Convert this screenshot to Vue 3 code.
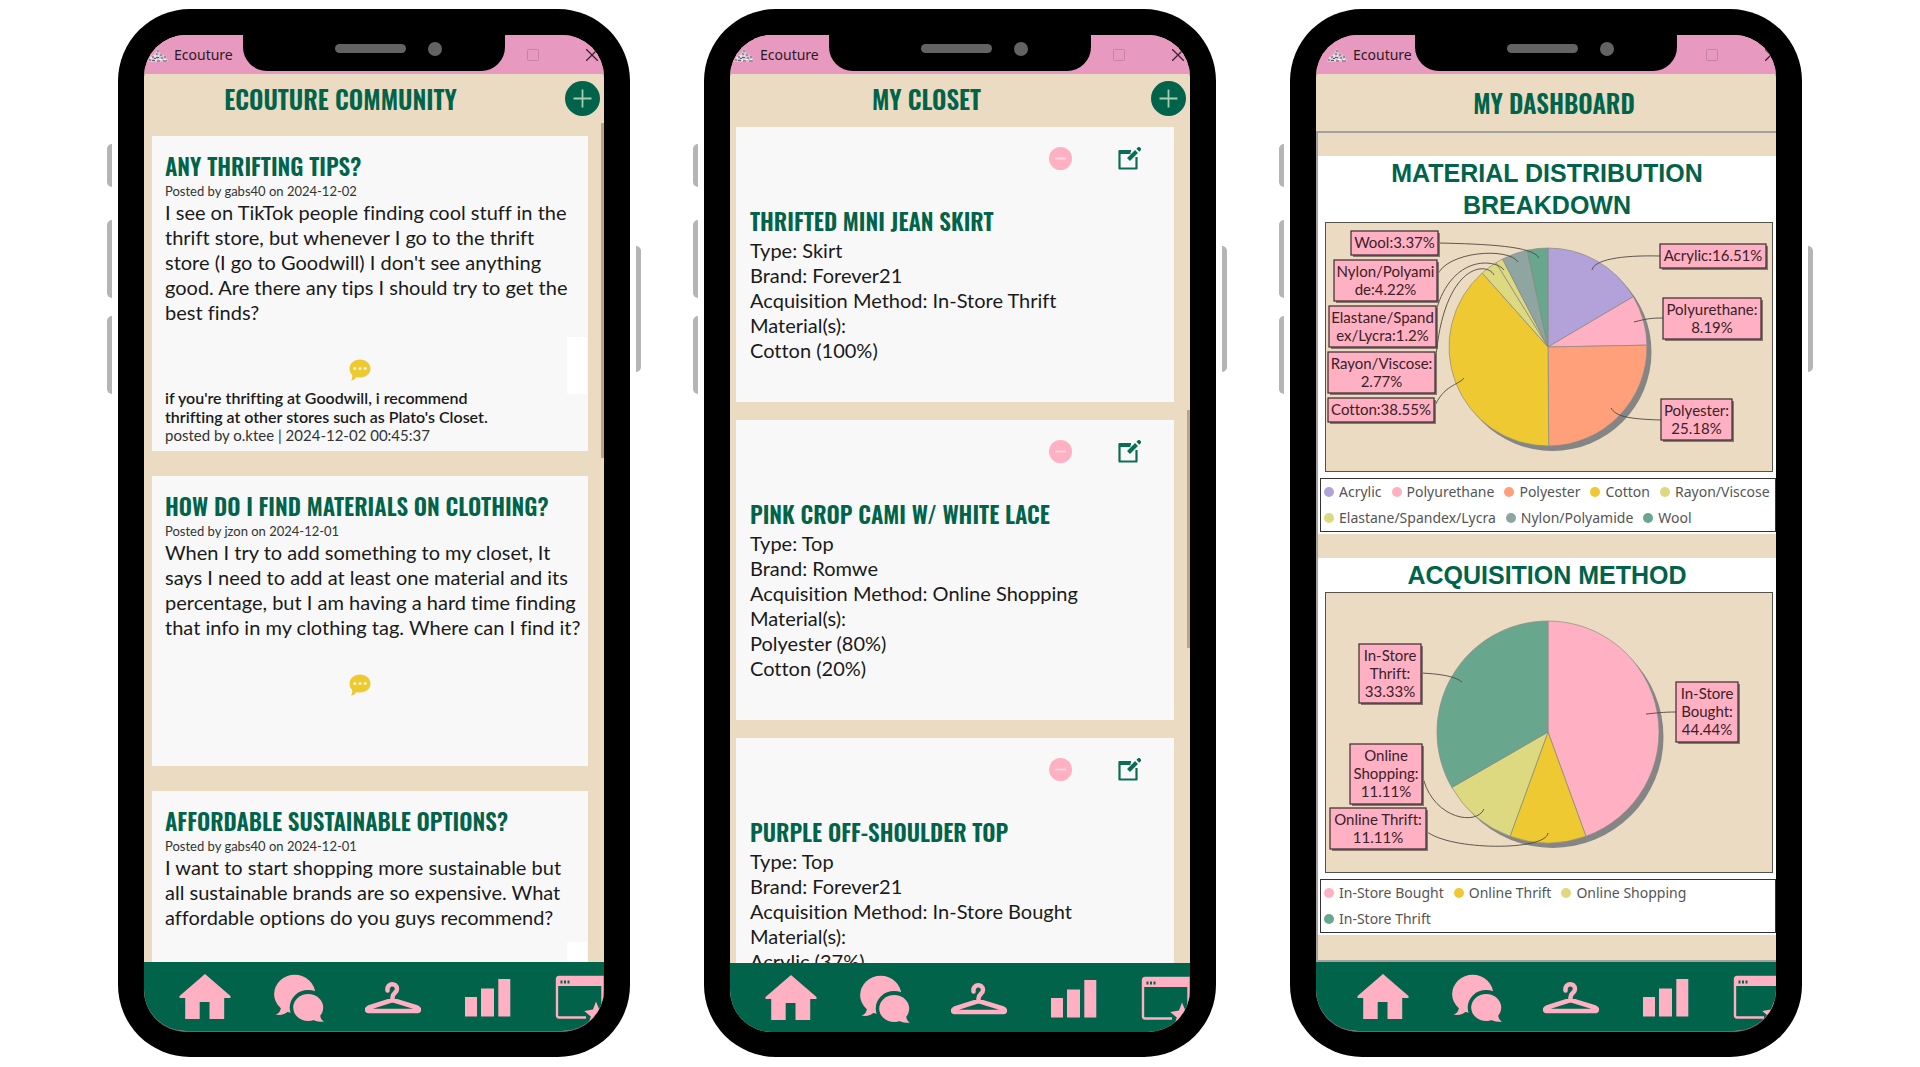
<script setup>
const posts = [
  {
    title: 'ANY THRIFTING TIPS?',
    meta: 'Posted by gabs40 on 2024-12-02',
    body: "I see on TikTok people finding cool stuff in the thrift store, but whenever I go to the thrift store (I go to Goodwill) I don't see anything good. Are there any tips I should try to get the best finds?",
    panel: true,
    comment: "if you're thrifting at Goodwill, i recommend thrifting at other stores such as Plato's Closet.",
    commentMeta: 'posted by o.ktee | 2024-12-02 00:45:37'
  },
  {
    title: 'HOW DO I FIND MATERIALS ON CLOTHING?',
    meta: 'Posted by jzon on 2024-12-01',
    body: 'When I try to add something to my closet, It says I need to add at least one material and its percentage, but I am having a hard time finding that info in my clothing tag. Where can I find it?'
  },
  {
    title: 'AFFORDABLE SUSTAINABLE OPTIONS?',
    meta: 'Posted by gabs40 on 2024-12-01',
    body: 'I want to start shopping more sustainable but all sustainable brands are so expensive. What affordable options do you guys recommend?',
    panel: true
  }
]

const items = [
  { title: 'THRIFTED MINI JEAN SKIRT', lines: ['Type: Skirt', 'Brand: Forever21', 'Acquisition Method: In-Store Thrift', 'Material(s):', 'Cotton (100%)'] },
  { title: 'PINK CROP CAMI W/ WHITE LACE', lines: ['Type: Top', 'Brand: Romwe', 'Acquisition Method: Online Shopping', 'Material(s):', 'Polyester (80%)', 'Cotton (20%)'] },
  { title: 'PURPLE OFF-SHOULDER TOP', lines: ['Type: Top', 'Brand: Forever21', 'Acquisition Method: In-Store Bought', 'Material(s):', 'Acrylic (37%)'] }
]

const C = {
  lilac: '#b3a2d9', pink: '#ffb0c2', orange: '#ffa07a', gold: '#eec931',
  khaki: '#ddd980', slate: '#8fa5a1', green: '#68a68d'
}

function slices(parts, cx, cy, r) {
  const total = parts.reduce((s, p) => s + p.value, 0)
  let at = 0
  return parts.map((p) => {
    const a = (at / total) * Math.PI * 2
    at += p.value
    const b = (at / total) * Math.PI * 2
    const large = b - a > Math.PI ? 1 : 0
    const x1 = cx + r * Math.sin(a), y1 = cy - r * Math.cos(a)
    const x2 = cx + r * Math.sin(b), y2 = cy - r * Math.cos(b)
    return { color: p.color, d: `M${cx} ${cy}L${x1} ${y1}A${r} ${r} 0 ${large} 1 ${x2} ${y2}Z` }
  })
}

function chart(c) {
  return { ...c, slices: slices(c.parts, c.cx, c.cy, c.r) }
}

const charts = [
  chart({
    title: 'MATERIAL DISTRIBUTION BREAKDOWN',
    width: 446, height: 248, cx: 222, cy: 124, r: 99,
    parts: [
      { name: 'Acrylic', value: 16.51, color: C.lilac },
      { name: 'Polyurethane', value: 8.19, color: C.pink },
      { name: 'Polyester', value: 25.18, color: C.orange },
      { name: 'Cotton', value: 38.55, color: C.gold },
      { name: 'Rayon/Viscose', value: 2.77, color: C.khaki },
      { name: 'Elastane/Spandex/Lycra', value: 1.2, color: C.khaki },
      { name: 'Nylon/Polyamide', value: 4.22, color: C.slate },
      { name: 'Wool', value: 3.37, color: C.green }
    ],
    labels: [
      { x: 25, y: 8, w: 87, h: 24, lines: ['Wool:3.37%'], lead: 'M112 20C160 21 207 23 213 35' },
      { x: 8, y: 37, w: 103, h: 41, lines: ['Nylon/Polyami', 'de:4.22%'], lead: 'M111 53C120 28 183 24 192 39' },
      { x: 3, y: 83, w: 107, h: 41, lines: ['Elastane/Spand', 'ex/Lycra:1.2%'], lead: 'M110 88C126 31 170 36 178 47' },
      { x: 2, y: 129, w: 107, h: 41, lines: ['Rayon/Viscose:', '2.77%'], lead: 'M109 148C114 42 160 37 168 52' },
      { x: 2, y: 175, w: 106, h: 24, lines: ['Cotton:38.55%'], lead: 'M108 185C117 162 133 162 138 155' },
      { x: 334, y: 21, w: 106, h: 24, lines: ['Acrylic:16.51%'], lead: 'M334 33C294 32 268 37 266 47' },
      { x: 337, y: 75, w: 98, h: 41, lines: ['Polyurethane:', '8.19%'], lead: 'M337 95C324 95 320 96 308 99' },
      { x: 335, y: 176, w: 71, h: 41, lines: ['Polyester:', '25.18%'], lead: 'M335 197C300 196 290 193 285 185' }
    ]
  }),
  chart({
    title: 'ACQUISITION METHOD',
    width: 446, height: 279, cx: 222, cy: 139, r: 111,
    parts: [
      { name: 'In-Store Bought', value: 44.44, color: C.pink },
      { name: 'Online Thrift', value: 11.11, color: C.gold },
      { name: 'Online Shopping', value: 11.11, color: C.khaki },
      { name: 'In-Store Thrift', value: 33.33, color: C.green }
    ],
    labels: [
      { x: 33, y: 51, w: 62, h: 59, lines: ['In-Store', 'Thrift:', '33.33%'], lead: 'M95 80C117 81 130 84 136 89' },
      { x: 350, y: 89, w: 62, h: 60, lines: ['In-Store', 'Bought:', '44.44%'], lead: 'M350 119C337 119 331 120 320 121' },
      { x: 24, y: 151, w: 72, h: 60, lines: ['Online', 'Shopping:', '11.11%'], lead: 'M96 180C104 225 150 234 158 216' },
      { x: 4, y: 215, w: 96, h: 41, lines: ['Online Thrift:', '11.11%'], lead: 'M100 238C124 258 220 258 222 240' }
    ]
  })
]

const phones = [
  { id: 'community', title: 'ECOUTURE COMMUNITY' },
  { id: 'closet', title: 'MY CLOSET' },
  { id: 'dashboard', title: 'MY DASHBOARD' }
]
const tabs = ['Home', 'Community', 'Closet', 'Dashboard', 'Wishlist']
</script>

<template>
  <main class="stage">
    <section v-for="p in phones" :key="p.id" class="device" :class="p.id">
      <div class="rail left"><i class="k1"></i><i class="k2"></i><i class="k2"></i></div>
      <div class="body">
        <div class="screen">
          <div class="notch"><span class="speaker"></span><span class="camera"></span></div>
          <div class="titlebar">
            <svg class="logo" width="20" height="14" viewBox="0 0 20 14" aria-hidden="true">
              <path d="M0 14L2 9L5 7L8 4L10 0L12 5L16 7L19 10L20 14Z" fill="#d9c3d0" />
              <path d="M1 12h2M4 9h2M4 12.500h3M8 6h2M8 9.500h3M9 3h2M12 7h2M13 10h2M16 9h2M15 13h4M9 13h3M6 10.500h2" stroke="#55606a" stroke-width="1" />
              <path d="M2 10h2M6 8h2M11 11.500h3M7 12h2M10 8h1M16 11.500h2" stroke="#fff" stroke-width="1" />
            </svg>
            <span class="app-name">Ecouture</span>
            <button class="win" aria-label="Maximize">
              <svg width="12" height="12" viewBox="0 0 12 12"><rect x="0.500" y="0.500" width="11" height="11" rx="1" fill="none" stroke="#c583a6" /></svg>
            </button>
            <button class="win" aria-label="Close">
              <svg width="12" height="12" viewBox="0 0 12 12"><path d="M0 0L12 12M12 0L0 12" stroke="#3a2230" stroke-width="1.300" /></svg>
            </button>
          </div>

          <header class="head">
            <h1>{{ p.title }}</h1>
            <button v-if="p.id !== 'dashboard'" class="add" aria-label="Add">
              <svg width="35" height="35" viewBox="0 0 35 35"><circle cx="17.500" cy="17.500" r="17.500" fill="#00634a" /><path d="M8.500 17.500h18M17.500 8.500v18" stroke="#a9cdb0" stroke-width="1.800" /></svg>
            </button>
          </header>

          <div v-if="p.id === 'community'" class="feed">
            <article v-for="post in posts" :key="post.title" class="card">
              <h2>{{ post.title }}</h2>
              <p class="meta">{{ post.meta }}</p>
              <p class="text">{{ post.body }}</p>
              <div class="reply-row">
                <button class="reply" aria-label="Reply">
                  <svg width="22" height="22" viewBox="0 0 22 22">
                    <path d="M11 0.500C17 0.500 21.500 4.500 21.500 9.500C21.500 15 17 18.500 11 18.500C9.500 18.500 8.500 18.400 7.500 18C6 20.500 4 21.500 2 21.500C3 20 3.300 18.200 3.200 16C1.300 14.200 0.500 12 0.500 9.500C0.500 4.500 5 0.500 11 0.500Z" fill="#eec931" />
                    <g fill="#fff6cf"><circle cx="5.800" cy="9.500" r="1.500" /><circle cx="11" cy="9.500" r="1.500" /><circle cx="16.200" cy="9.500" r="1.500" /></g>
                  </svg>
                </button>
                <span v-if="post.panel" class="panel"></span>
              </div>
              <div class="comments">
                <template v-if="post.comment">
                  <p class="comment">{{ post.comment }}</p>
                  <p class="comment-meta">{{ post.commentMeta }}</p>
                </template>
              </div>
            </article>
            <span class="thumb"></span>
          </div>

          <div v-else-if="p.id === 'closet'" class="feed">
            <article v-for="item in items" :key="item.title" class="card">
              <div class="tools">
                <button aria-label="Remove">
                  <svg width="23" height="23" viewBox="0 0 23 23"><circle cx="11.500" cy="11.500" r="11.500" fill="#ffb0c2" /><path d="M6 11.500h11" stroke="#ffd9e0" stroke-width="1.800" /></svg>
                </button>
                <button aria-label="Edit">
                  <svg width="23" height="23" viewBox="0 0 23 23" fill="none" stroke="#0b6e54">
                    <path d="M13 4H1.500V21.500H18.500V10" stroke-width="2.200" stroke-linejoin="round" />
                    <path d="M1 5H12.500" stroke-width="4" />
                    <path d="M10.500 12.500L18.500 4.500" stroke-width="4" />
                    <path d="M19.800 3.200L22.300 0.800" stroke-width="4" />
                  </svg>
                </button>
              </div>
              <h2>{{ item.title }}</h2>
              <p v-for="line in item.lines" :key="line" class="text">{{ line }}</p>
            </article>
            <span class="thumb"></span>
          </div>

          <div v-else class="feed">
            <figure v-for="c in charts" :key="c.title" class="chart">
              <figcaption>{{ c.title }}</figcaption>
              <svg class="plot" :viewBox="`0 0 ${c.width} ${c.height}`">
                <circle :cx="c.cx + 4.500" :cy="c.cy + 5" :r="c.r" fill="#858585" />
                <path v-for="(s, i) in c.slices" :key="i" :d="s.d" :fill="s.color" stroke="#8b8b84" stroke-width="0.700" />
                <g v-for="l in c.labels" :key="l.lead">
                  <path :d="l.lead" fill="none" stroke="#4d483f" stroke-width="0.900" />
                  <rect :x="l.x + 2" :y="l.y + 2" :width="l.w" :height="l.h" fill="#85796f" />
                  <rect :x="l.x" :y="l.y" :width="l.w" :height="l.h" fill="#ffb0c2" stroke="#3a2b2e" stroke-width="1.200" />
                  <text v-for="(t, i) in l.lines" :key="t" class="tag" :x="l.x + l.w / 2" :y="l.y + 17 + i * 18">{{ t }}</text>
                </g>
              </svg>
              <ul class="legend">
                <li v-for="s in c.parts" :key="s.name"><i class="dot" :style="{ background: s.color }"></i>{{ s.name }}</li>
              </ul>
            </figure>
          </div>

          <nav class="tabs">
            <button v-for="(t, i) in tabs" :key="t" :aria-label="t">
              <svg width="56" height="50" viewBox="0 0 56 50" fill="#ffb0c2">
                <path v-if="i === 0" d="M28 2L53.500 24V26H47.200V47H32.500V30H22.700V47H8.200V26H2.500V24Z" />
                <g v-else-if="i === 1">
                  <ellipse cx="23.700" cy="22" rx="20.600" ry="19.200" />
                  <path d="M10 34C10 39 8 41.500 4.500 42.500C9 44 15 42 19 38Z" />
                  <ellipse cx="37.200" cy="35.500" rx="18.500" ry="17.500" fill="#00634a" />
                  <ellipse cx="37.200" cy="35.500" rx="15" ry="13.500" />
                  <path d="M49 41C49 45 50 48 53 49.500C48 50.500 43 49 39 46Z" />
                </g>
                <path v-else-if="i === 2" d="M22.500 18.500C21.500 10.500 32 10.500 32 17C32 21 27.500 20.500 27.500 25.500V28.500M27.500 28L4 35.500C1 37 1.500 39 4.500 39H51.500C54.500 39 55 37 52 35.500Z" fill="none" stroke="#ffb0c2" stroke-width="4.500" stroke-linejoin="round" stroke-linecap="round" />
                <path v-else-if="i === 3" d="M6 25H18V44.500H6ZM22 16.500H35V44.500H22ZM39.300 7H51.300V44.500H39.300Z" />
                <g v-else>
                  <path d="M33 45.500H6Q4 45.500 4 43.500V7Q4 5 6 5H49.500V32" fill="none" stroke="#ffb0c2" stroke-width="2.400" />
                  <path d="M4 5H50V14H4Z" />
                  <path d="M7.500 8.500h2v3h-2zM11 8.500h2v3h-2zM14.500 8.500h2v3h-2z" fill="#00634a" />
                  <path d="M43 29.500L46.300 37.500L55 38.500L48.500 44L50.500 50L43 47L36 50L37.800 44.500L31.200 39L40 37.500Z" />
                </g>
              </svg>
            </button>
          </nav>
        </div>
      </div>
      <div class="rail right"><i class="k3"></i></div>
    </section>
  </main>
</template>

<style>
body { margin: 0; background: #fff; }
</style>

<style scoped>
* { box-sizing: border-box; }
h1, h2, p, figure, ul { margin: 0; padding: 0; }
button { padding: 0; border: 0; background: none; cursor: pointer; }
svg { display: block; }
.stage {
  display: flex;
  gap: 52px;
  height: 100vh;
  padding: 9px 107px 10px;
  font-family: Lato, sans-serif;
  font-variant-ligatures: none;
}
.device { flex: 1 1 0; min-width: 0; display: flex; gap: 6px; }
.rail { flex: 0 0 5px; display: flex; flex-direction: column; }
.rail i { background: #b5b5b5; }
.left i { border-radius: 5px 0 0 5px; }
.right i { border-radius: 0 5px 5px 0; }
.left { padding-top: 135px; }
.right { padding-top: 237px; }
.k1 { height: 43px; margin-bottom: 33px; }
.k2 { height: 78px; margin-bottom: 18px; }
.k3 { height: 126px; }
.body {
  flex: 1 1 0;
  min-width: 0;
  display: flex;
  padding: 26px 26px 25px;
  border-radius: 72px;
  background: #000;
}
.screen {
  position: relative;
  flex: 1;
  min-width: 0;
  display: flex;
  flex-direction: column;
  overflow: hidden;
  border-radius: 42px;
  background: #ebdbc2;
}
.notch {
  position: absolute;
  top: 0;
  left: 50%;
  width: 262px;
  height: 36px;
  margin-left: -131px;
  padding: 0 0 9px 92px;
  display: flex;
  align-items: center;
  gap: 22px;
  border-radius: 0 0 24px 24px;
  background: #000;
}
.speaker { width: 71px; height: 9px; border-radius: 5px; background: #636363; }
.camera { width: 14px; height: 14px; border-radius: 50%; background: #636363; }
.titlebar {
  flex: 0 0 39px;
  display: flex;
  align-items: center;
  padding-left: 4px;
  background: #e899c0;
  color: #2b1a24;
  font: 14px/20px "Segoe UI", "Noto Sans", sans-serif;
}
.logo { flex: 0 0 20px; }
.app-name { flex: 0 0 359px; padding-left: 6px; }
.win { flex: 0 0 12px; margin-right: 47px; }
.dashboard .titlebar { padding-left: 11px; }
.head { flex: 0 0 49px; display: flex; align-items: center; padding-right: 4px; }
h1, h2 {
  font-family: Oswald, "Liberation Sans Narrow", "Liberation Sans", sans-serif;
  font-weight: 600;
  color: #00634a;
  white-space: nowrap;
}
h1 { flex: 1; padding-right: 28px; text-align: center; font-size: 25px; line-height: 32px; }
.feed { position: relative; flex: 1 1 0; min-height: 0; overflow: hidden; padding: 13px 16px 0 8px; }
.closet .feed { padding: 4px 16px 0 6px; }
.card { margin-bottom: 25px; padding: 17px 6px 6px 13px; background: #f8f8f8; }
.closet .card { margin-bottom: 18px; padding: 20px 33px 39px 14px; }
h2 { margin-bottom: 3px; font-size: 23px; line-height: 27px; }
.meta { font-size: 13px; line-height: 17px; color: #333; }
.text { font-size: 20px; line-height: 25px; color: #1a1a1a; }
.reply-row { position: relative; display: flex; justify-content: center; height: 51px; margin-top: 12px; padding-right: 28px; }
.reply { height: 22px; margin-top: 22px; }
.panel { position: absolute; top: 0; right: -5px; width: 20px; height: 57px; background: #fff; }
.comments { min-height: 57px; font-size: 15px; line-height: 19px; }
.comment { max-width: 350px; font-size: 16px; font-weight: 600; color: #1a1a1a; }
.comment-meta { color: #333; }
.tools { display: flex; justify-content: flex-end; gap: 46px; margin-bottom: 38px; }
.thumb { position: absolute; top: 0; right: 0; width: 3px; height: 335px; background: #bca48a; }
.closet .thumb { top: 287px; height: 238px; }
.tabs { flex: 0 0 69px; display: flex; padding-left: 14px; overflow: hidden; background: #00634a; }
.tabs button { flex: 0 0 94px; display: grid; place-items: center; }
.community .screen, .dashboard .screen { border-bottom: 1px solid #8a5570; }

.dashboard .tabs { padding-left: 20px; }
.dashboard .head { flex-basis: 57px; padding: 0 0 0 16px; }
.dashboard h1 { padding: 0; }
.dashboard .feed { padding: 23px 0 0; border: 2px solid #a3a0a0; border-width: 2px 0 2px 2px; }
.chart { margin-bottom: 24px; padding: 0 0 2px; background: #fff; }
figcaption {
  max-width: 380px;
  margin: 0 auto;
  padding: 1px 0;
  text-align: center;
  font: 700 25px/32px "Liberation Sans", Arial, sans-serif;
  color: #00634a;
}
.plot { width: calc(100% - 10px); margin: 0 3px 0 7px; border: 1px solid #55514b; background: #ebdbc2; }
.tag { font-size: 15px; fill: #3a2228; text-anchor: middle; }
.legend {
  display: flex;
  flex-wrap: wrap;
  gap: 0 10px;
  margin: 6px 0 0 2px;
  padding: 0 0 0 3px;
  border: 1px solid #333;
  list-style: none;
  font: 14px/26px "Noto Sans", sans-serif;
  color: #555;
}
.legend li { display: flex; align-items: center; gap: 5px; white-space: nowrap; }
.dot { width: 10px; height: 10px; border-radius: 50%; }
</style>
